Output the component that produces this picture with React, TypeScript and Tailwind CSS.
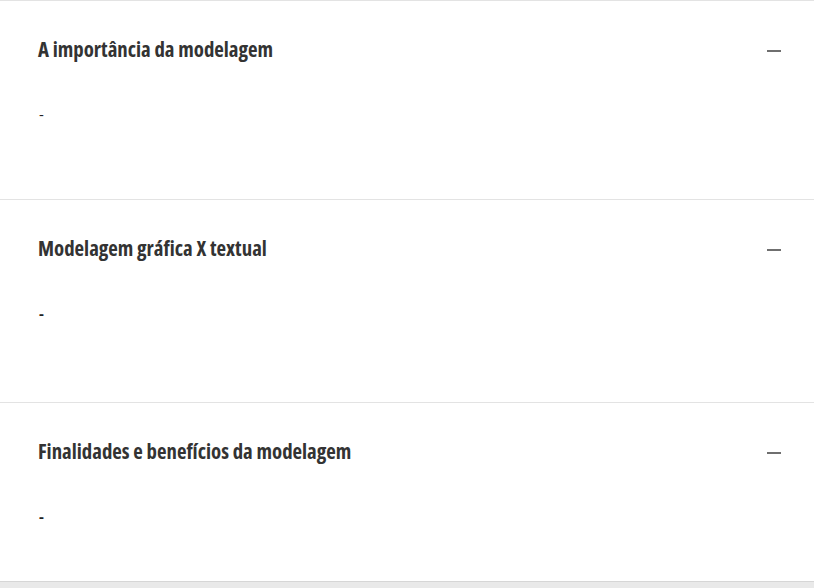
const items = [
  { title: 'A importância da modelagem', body: 'h-[101px]', dash: 'font-normal' },
  { title: 'Modelagem gráfica X textual', body: 'h-[105px]', dash: 'font-bold' },
  { title: 'Finalidades e benefícios da modelagem', body: 'h-[81px]', dash: 'font-bold' },
];

function MinusIcon() {
  return (
    <svg width="14" height="14" viewBox="0 0 14 14" className="shrink-0 mt-[2px]">
      <rect x="0" y="6" width="14" height="2" fill="#6f6f6f" />
    </svg>
  );
}

export default function App() {
  return (
    <div className="w-[814px] h-[588px] bg-[#e9e9e9] font-['Open_Sans',sans-serif] overflow-hidden">
      <div className="bg-white border-b border-[#d6d6d6]">
        {items.map((item, i) => (
          <section key={i} className="border-t border-[#e3e3e3]">
            <div className="h-[97px] flex items-center justify-between pl-[38px] pr-[33px]">
              <h3 className="text-[20.8px] font-bold font-stretch-condensed text-[#333333]">
                {item.title}
              </h3>
              <MinusIcon />
            </div>
            <div className={`${item.body} pl-[39px] pt-[4px]`}>
              <p className={`text-[15px] leading-[24px] text-[#222222] ${item.dash}`}>-</p>
            </div>
          </section>
        ))}
      </div>
    </div>
  );
}
